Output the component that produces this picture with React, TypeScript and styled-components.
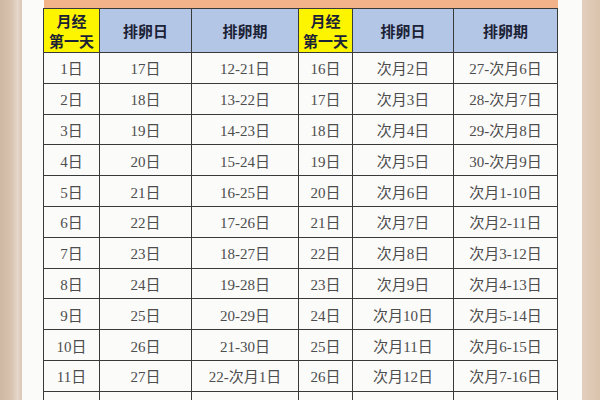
import React from 'react';
import styled, { createGlobalStyle } from 'styled-components';

const Global = createGlobalStyle`
	html, body {
		margin: 0;
		padding: 0;
		overflow: hidden;
		background: #dcc5b0;
	}
`;

const Page = styled.div`
	display: flex;
	height: 400px;
	width: 600px;
	overflow: hidden;
`;

const Edge = styled.div<{ side: 'left' | 'right' }>`
	flex: 0 0 ${(p) => (p.side === 'left' ? '22px' : '18px')};
	background: ${(p) =>
		p.side === 'left'
			? 'linear-gradient(90deg, #cfb8a2 0%, #d8c4b1 55%, #e6d8cb 80%, #d9c7b6 100%)'
			: 'linear-gradient(90deg, #e3cfbd 0%, #dac3ad 100%)'};
`;

const Paper = styled.div`
	flex: 0 0 560px;
	background: #fbfbfa;
	padding-left: 21px;
	box-sizing: border-box;
`;

const Sheet = styled.table`
	width: 514px;
	table-layout: fixed;
	border-collapse: collapse;
	font-family: 'Liberation Serif', 'Noto Sans CJK SC', serif;
`;

const TitleBand = styled.td`
	height: 8px;
	padding: 0;
	background: #f3b38a;
	border-bottom: 1px solid #3a3a3a;
`;

const HeadCell = styled.th<{ tone: 'yellow' | 'blue' }>`
	height: 43px;
	padding: 0;
	background: ${(p) => (p.tone === 'yellow' ? '#fdf500' : '#b4c6e6')};
	border: 1px solid #3a3a3a;
	font-family: 'Noto Sans CJK SC', sans-serif;
	font-weight: 700;
	font-size: 15px;
	line-height: 20px;
	color: #1b2235;
	text-align: center;
	vertical-align: middle;
`;

const Row = styled.tr`
	height: 30.8px;
`;

const Cell = styled.td`
	padding: 0;
	border: 1px solid #3a3a3a;
	font-size: 15px;
	color: #4d4d4d;
	text-align: center;
	vertical-align: middle;
	white-space: nowrap;
`;

const widths = [56, 92, 107, 54, 101, 104];

type Entry = [string, string, string, string, string, string];

const left = (d: number): [string, string, string] => {
	const end = d + 20;
	const span = end > 30 ? `${d + 11}-次月${end - 30}日` : `${d + 11}-${end}日`;
	return [`${d}日`, `${d + 16}日`, span];
};

const right = (d: number): [string, string, string] => {
	const start = d + 11;
	const span = start > 30 ? `次月${start - 30}-${d - 10}日` : `${start}-次月${d - 10}日`;
	return [`${d}日`, `次月${d - 14}日`, span];
};

const rows: Entry[] = Array.from({ length: 11 }, (_, i) => [...left(i + 1), ...right(i + 16)] as Entry);

export default function App() {
	return (
		<>
			<Global />
			<Page>
				<Edge side="left" />
				<Paper>
					<Sheet>
						<colgroup>
							{widths.map((w, i) => (
								<col key={i} style={{ width: w }} />
							))}
						</colgroup>
						<thead>
							<tr>
								<TitleBand colSpan={6} />
							</tr>
							<tr>
								<HeadCell tone="yellow">
									月经
									<br />
									第一天
								</HeadCell>
								<HeadCell tone="blue">排卵日</HeadCell>
								<HeadCell tone="blue">排卵期</HeadCell>
								<HeadCell tone="yellow">
									月经
									<br />
									第一天
								</HeadCell>
								<HeadCell tone="blue">排卵日</HeadCell>
								<HeadCell tone="blue">排卵期</HeadCell>
							</tr>
						</thead>
						<tbody>
							{rows.map((r, i) => (
								<Row key={i}>
									{r.map((v, j) => (
										<Cell key={j}>{v}</Cell>
									))}
								</Row>
							))}
							{/* next row starts at the bottom edge; only its top border shows */}
							<Row>
								{widths.map((_, j) => (
									<Cell key={j} />
								))}
							</Row>
						</tbody>
					</Sheet>
				</Paper>
				<Edge side="right" />
			</Page>
		</>
	);
}
